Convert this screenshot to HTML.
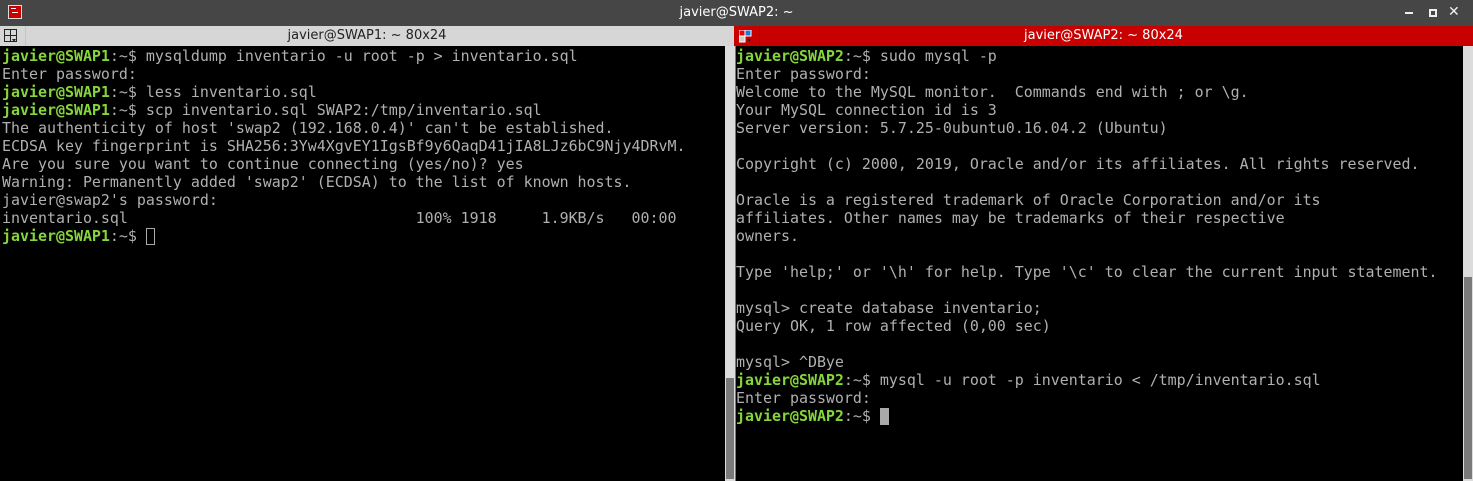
<!DOCTYPE html>
<html><head><meta charset="utf-8"><style>
html,body{margin:0;padding:0;width:1473px;height:481px;overflow:hidden;background:#000;}
.top{position:absolute;left:0;top:0;width:1473px;height:26px;background:#464646;color:#fff;font:13px "DejaVu Sans","Liberation Sans",sans-serif;}
.top .t{position:absolute;left:0;width:100%;top:5px;text-align:center;}
.ptitle{position:absolute;top:26px;height:20px;font:13px "DejaVu Sans","Liberation Sans",sans-serif;}
.ptitle .t{position:absolute;top:2px;width:100%;text-align:center;}
.term{position:absolute;top:47px;margin:0;font:14.95px/18px "DejaVu Sans Mono","Liberation Mono",monospace;color:#b0b0b0;white-space:pre;}
.g{color:#85d63a;font-weight:bold;}
.sb{position:absolute;background:#dcdcdc;width:10px;}
.th{position:absolute;background:#7a7a7a;left:1px;width:8px;}
</style></head><body>
<div class="top">
  <div style="position:absolute;left:8px;top:5px;width:14px;height:14px;background:#c00;border:1px solid #ddd;box-sizing:border-box"><div style="position:absolute;left:2px;top:2px;width:5px;height:1px;background:#fff"></div><div style="position:absolute;left:3px;top:6px;width:6px;height:1px;background:#fff"></div></div>
  <div class="t">javier@SWAP2: ~</div>
  <div style="position:absolute;left:1405px;top:12px;width:8px;height:2px;background:#eee"></div>
  <div style="position:absolute;left:1429px;top:9px;width:8px;height:8px;border:2px solid #eee;box-sizing:border-box"></div>
  <div style="position:absolute;left:1448px;top:4px;color:#eee;font:bold 14px 'DejaVu Sans',sans-serif">✕</div>
</div>
<div class="ptitle" style="left:0;width:734px;background:#d6d6d6;color:#222">
  <div style="position:absolute;left:4px;top:3px;width:13px;height:13px"><svg width="13" height="14"><path d="M.5 .5h12v12H.5zM6.5 .5v12M.5 6.5h12" fill="none" stroke="#222"/><path d="M8 10h4l-2 3z" fill="#222"/></svg></div>
  <div style="position:absolute;left:25px;top:0;width:1px;height:20px;background:#c4c4c4"></div>
  <div class="t">javier@SWAP1: ~ 80x24</div>
</div>
<div class="ptitle" style="left:734px;width:739px;background:#c80000;color:#fff">
  <div style="position:absolute;left:5px;top:4px;width:13px;height:13px"><svg width="14" height="14"><rect x="0" y="0" width="6" height="6" fill="#e00" stroke="#fff"/><rect x="6" y="0" width="6" height="6" fill="#1a7ad8" stroke="#fff"/><rect x="0" y="6" width="6" height="6" fill="#ccc" stroke="#fff"/><path d="M8 9h4l-2 3z" fill="#222"/></svg></div>
  <div style="position:absolute;left:25px;top:0;width:1px;height:20px;background:#b00000"></div>
  <div class="t">javier@SWAP2: ~ 80x24</div>
</div>
<div class="sb" style="left:725px;top:46px;height:435px"><div class="th" style="top:332px;height:101px"></div></div>
<div class="sb" style="left:1463px;top:46px;height:435px"><div class="th" style="top:231px;height:202px"></div></div>
<div style="position:absolute;left:735px;top:46px;width:1px;height:435px;background:#777"></div>
<pre class="term" style="left:2px"><span class="g">javier@SWAP1</span>:~$ mysqldump inventario -u root -p &gt; inventario.sql
Enter password:
<span class="g">javier@SWAP1</span>:~$ less inventario.sql
<span class="g">javier@SWAP1</span>:~$ scp inventario.sql SWAP2:/tmp/inventario.sql
The authenticity of host 'swap2 (192.168.0.4)' can't be established.
ECDSA key fingerprint is SHA256:3Yw4XgvEY1IgsBf9y6QaqD41jIA8LJz6bC9Njy4DRvM.
Are you sure you want to continue connecting (yes/no)? yes
Warning: Permanently added 'swap2' (ECDSA) to the list of known hosts.
javier@swap2's password:
inventario.sql                                100% 1918     1.9KB/s   00:00
<span class="g">javier@SWAP1</span>:~$ <span style="display:inline-block;width:9px;height:17px;border:1px solid #aaa;box-sizing:border-box;vertical-align:-4px"></span></pre>
<pre class="term" style="left:736px"><span class="g">javier@SWAP2</span>:~$ sudo mysql -p
Enter password:
Welcome to the MySQL monitor.  Commands end with ; or \g.
Your MySQL connection id is 3
Server version: 5.7.25-0ubuntu0.16.04.2 (Ubuntu)

Copyright (c) 2000, 2019, Oracle and/or its affiliates. All rights reserved.

Oracle is a registered trademark of Oracle Corporation and/or its
affiliates. Other names may be trademarks of their respective
owners.

Type 'help;' or '\h' for help. Type '\c' to clear the current input statement.

mysql&gt; create database inventario;
Query OK, 1 row affected (0,00 sec)

mysql&gt; ^DBye
<span class="g">javier@SWAP2</span>:~$ mysql -u root -p inventario &lt; /tmp/inventario.sql
Enter password:
<span class="g">javier@SWAP2</span>:~$ <span style="display:inline-block;width:9px;height:17px;background:#aaa;vertical-align:-4px"></span></pre>
</body></html>
